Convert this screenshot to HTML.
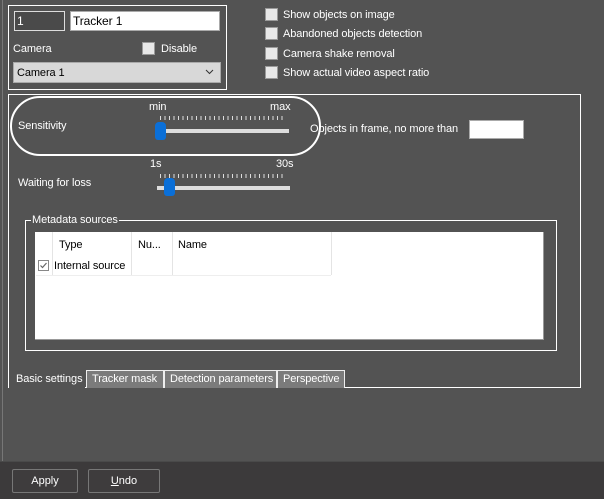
<!DOCTYPE html><html><head><style>
*{box-sizing:border-box;margin:0;padding:0}
body{width:604px;height:499px;background:#535353;font-family:"Liberation Sans",sans-serif;font-size:11px;color:#fff;position:relative;overflow:hidden}
.a{position:absolute}
.t{position:absolute;line-height:14px;white-space:nowrap;letter-spacing:-0.1px}
.cb{position:absolute;width:13px;height:13px;background:#e8e8e8;border:1px solid #9a9a9a}
.tick{position:absolute;height:4px;background-image:repeating-linear-gradient(90deg,#ddd 0 1px,transparent 1px 4.5px)}
.trk{position:absolute;height:4px;background:#ddd}
.thumb{position:absolute;width:11px;height:18px;background:#0a6fd8;border-radius:4px 4px 3px 3px}
.tab{position:absolute;top:370px;height:18px;background:#7b7b7b;border:1px solid #eee;border-bottom:none;line-height:17px;padding-left:5px;color:#fff;white-space:nowrap;overflow:hidden;letter-spacing:-0.1px}
.btn{position:absolute;top:469px;height:24px;border:1px solid #777;border-radius:2px;background:#3e3c3d;text-align:center;line-height:22px}
</style></head><body>
<div class="a" style="left:2px;top:0;width:1px;height:462px;background:#777"></div>
<div class="a" style="left:8px;top:5px;width:219px;height:85px;border:1px solid #fff"></div>
<div class="a" style="left:14px;top:11px;width:51px;height:20px;border:1px solid #ddd;background:#4a4a4a"></div>
<div class="t" style="left:17px;top:14px;font-size:12px">1</div>
<div class="a" style="left:70px;top:11px;width:150px;height:20px;background:#fff;border:1px solid #aaa"></div>
<div class="t" style="left:73px;top:14px;color:#000;font-size:12px">Tracker 1</div>
<div class="t" style="left:13px;top:42px">Camera</div>
<div class="cb" style="left:142px;top:42px"></div>
<div class="t" style="left:161px;top:42px">Disable</div>
<div class="a" style="left:13px;top:62px;width:208px;height:21px;background:#d8d8d8;border:1px solid #aaa"></div>
<div class="t" style="left:17px;top:66px;color:#000">Camera 1</div>
<svg class="a" style="left:205px;top:69px" width="9" height="6"><path d="M1 1L4.5 4.5L8 1" stroke="#333" fill="none"/></svg>

<div class="cb" style="left:265px;top:8px"></div><div class="t" style="left:283px;top:8px">Show objects on image</div>
<div class="cb" style="left:265px;top:27px"></div><div class="t" style="left:283px;top:27px">Abandoned objects detection</div>
<div class="cb" style="left:265px;top:47px"></div><div class="t" style="left:283px;top:47px">Camera shake removal</div>
<div class="cb" style="left:265px;top:66px"></div><div class="t" style="left:283px;top:66px">Show actual video aspect ratio</div>

<div class="a" style="left:8px;top:94px;width:573px;height:294px;border:1px solid #fff"></div>
<div class="a" style="left:10px;top:96px;width:311px;height:60px;border:2px solid #fff;border-radius:30px"></div>
<div class="t" style="left:18px;top:119px">Sensitivity</div>
<div class="t" style="left:149px;top:100px">min</div>
<div class="t" style="left:270px;top:100px">max</div>
<div class="tick" style="left:160px;top:116px;width:125px"></div>
<div class="trk" style="left:160px;top:129px;width:129px"></div>
<div class="thumb" style="left:155px;top:122px"></div>
<div class="t" style="left:310px;top:122px">Objects in frame, no more than</div>
<div class="a" style="left:469px;top:120px;width:55px;height:19px;background:#fff;border:1px solid #aaa"></div>
<div class="t" style="left:150px;top:157px">1s</div>
<div class="t" style="left:276px;top:157px">30s</div>
<div class="tick" style="left:160px;top:174px;width:125px"></div>
<div class="trk" style="left:157px;top:186px;width:133px"></div>
<div class="thumb" style="left:164px;top:178px"></div>
<div class="t" style="left:18px;top:176px">Waiting for loss</div>

<div class="a" style="left:25px;top:220px;width:532px;height:131px;border:1px solid #fff"></div>
<div class="t" style="left:31px;top:213px;background:#535353;padding:0 1px">Metadata sources</div>
<div class="a" style="left:35px;top:232px;width:509px;height:108px;background:#fff;border-right:1px solid #999;border-bottom:1px solid #999"></div>
<div class="a" style="left:52px;top:232px;width:1px;height:43px;background:#e4e4e4"></div>
<div class="a" style="left:131px;top:232px;width:1px;height:43px;background:#e4e4e4"></div>
<div class="a" style="left:172px;top:232px;width:1px;height:43px;background:#e4e4e4"></div>
<div class="a" style="left:331px;top:232px;width:1px;height:43px;background:#e4e4e4"></div>
<div class="a" style="left:36px;top:275px;width:295px;height:1px;background:#eee"></div>
<div class="t" style="left:59px;top:238px;color:#000">Type</div>
<div class="t" style="left:138px;top:238px;color:#000">Nu...</div>
<div class="t" style="left:178px;top:238px;color:#000">Name</div>
<div class="a" style="left:38px;top:260px;width:11px;height:11px;border:1px solid #888;background:#fff"></div>
<svg class="a" style="left:39px;top:261px" width="9" height="9"><path d="M1.5 4.5L3.5 6.5L7.5 2" stroke="#666" stroke-width="1.2" fill="none"/></svg>
<div class="t" style="left:54px;top:259px;color:#000">Internal source</div>

<div class="a" style="left:9px;top:369px;width:76px;height:19px;background:#535353"></div>
<div class="t" style="left:16px;top:372px">Basic settings</div>
<div class="tab" style="left:86px;width:78px">Tracker mask</div>
<div class="tab" style="left:164px;width:113px">Detection parameters</div>
<div class="tab" style="left:277px;width:68px">Perspective</div>

<div class="a" style="left:0;top:461px;width:604px;height:38px;background:#3c3a3b;border-top:1px solid #4a4a4a"></div>
<div class="btn" style="left:12px;width:66px">Apply</div>
<div class="btn" style="left:88px;width:72px"><u>U</u>ndo</div>
</body></html>
